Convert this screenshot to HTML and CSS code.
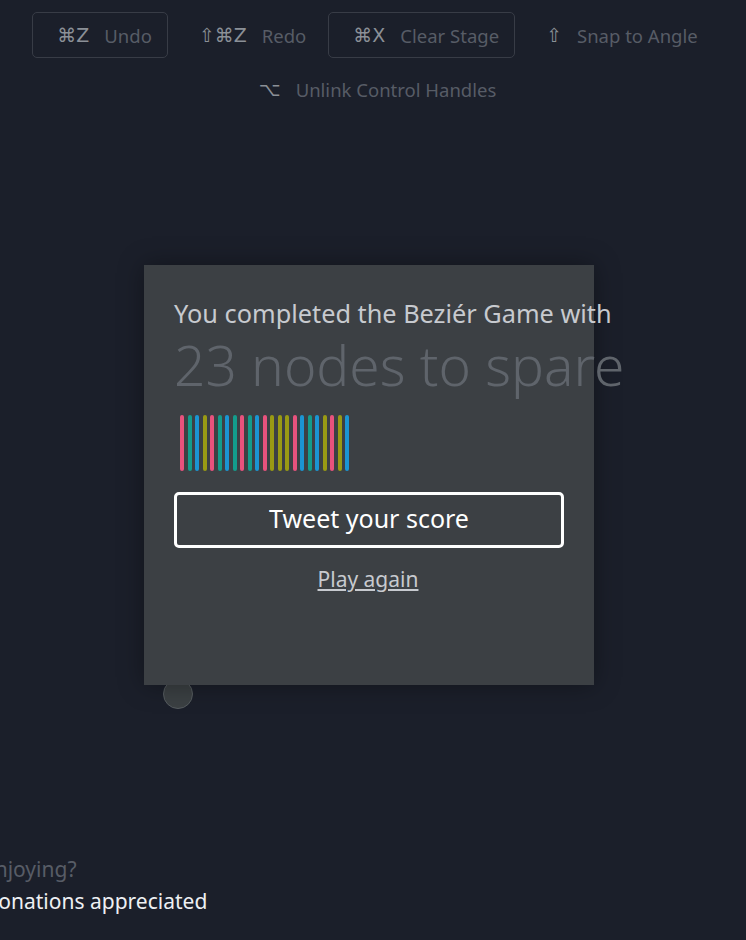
FILE: index.html
```html
<!DOCTYPE html>
<html lang="en">
<head>
<meta charset="utf-8">
<title>Bezier Game</title>
<link rel="stylesheet" href="styles.css">
</head>
<body>
<div class="stage">
  <nav class="toolbar">
    <button class="tool boxed"><span class="key">⌘Z</span><span class="label">Undo</span></button>
    <button class="tool"><span class="key">⇧⌘Z</span><span class="label">Redo</span></button>
    <button class="tool boxed"><span class="key">⌘X</span><span class="label">Clear Stage</span></button>
    <button class="tool"><span class="key">⇧</span><span class="label">Snap to Angle</span></button>
    <button class="tool"><span class="key">⌥</span><span class="label">Unlink Control Handles</span></button>
  </nav>

  <div class="node"></div>

  <div class="modal">
    <p class="intro">You completed the Beziér Game with</p>
    <p class="score">23 nodes to spare</p>
    <div class="bars">
      <span class="bar pink"></span><span class="bar teal"></span><span class="bar blue"></span><span class="bar olive"></span>
      <span class="bar pink"></span><span class="bar teal"></span><span class="bar blue"></span><span class="bar teal"></span>
      <span class="bar pink"></span><span class="bar teal"></span><span class="bar blue"></span><span class="bar pink"></span>
      <span class="bar olive"></span><span class="bar olive"></span><span class="bar olive"></span><span class="bar pink"></span>
      <span class="bar blue"></span><span class="bar teal"></span><span class="bar blue"></span><span class="bar olive"></span>
      <span class="bar pink"></span><span class="bar olive"></span><span class="bar blue"></span>
    </div>
    <button class="tweet">Tweet your score</button>
    <a class="again" href="#">Play again</a>
  </div>

  <div class="footer">
    <p class="enjoy">Enjoying?</p>
    <p class="donate">Donations appreciated</p>
  </div>
</div>
</body>
</html>
```

FILE: styles.css
```css
html, body {
  margin: 0;
  padding: 0;
  height: 100%;
  background: #1b1f2a;
  overflow: hidden;
}
body {
  font-family: "Noto Sans", "Open Sans", "DejaVu Sans", sans-serif;
}
.stage {
  position: relative;
  width: 746px;
  height: 940px;
}
.toolbar {
  display: flex;
  flex-wrap: wrap;
  justify-content: center;
  column-gap: 6px;
  row-gap: 8px;
  padding: 12px 0 0;
}
.tool {
  display: flex;
  align-items: center;
  gap: 15px;
  height: 46px;
  padding: 0 15px 0 24px;
  border: 1px solid transparent;
  border-radius: 5px;
  background: transparent;
  font-family: inherit;
  font-size: 18.5px;
  cursor: pointer;
}
.tool.boxed {
  border-color: #383c46;
}
.key {
  color: #8b9097;
  font-family: "DejaVu Sans", sans-serif;
  font-size: 19px;
}
.label {
  color: #575c66;
}
.node {
  position: absolute;
  left: 163px;
  top: 679px;
  width: 28px;
  height: 28px;
  border-radius: 50%;
  background: #3b4043;
  border: 1px solid #555b5f;
}
.modal {
  position: absolute;
  left: 144px;
  top: 265px;
  width: 450px;
  height: 420px;
  box-sizing: border-box;
  padding: 28px 30px 0;
  background: #3c4044;
  box-shadow: 0 0 24px rgba(0, 0, 0, 0.35);
  display: flex;
  flex-direction: column;
  align-items: flex-start;
}
.intro {
  margin: 0;
  font-size: 25.3px;
  line-height: 40px;
  color: #c7cacf;
  white-space: nowrap;
}
.score {
  margin: 0;
  font-size: 55px;
  font-weight: 300;
  line-height: 64px;
  color: #5f646b;
  white-space: nowrap;
}
.bars {
  display: flex;
  gap: 3.5px;
  margin: 18px 0 0 6px;
}
.bar {
  display: block;
  width: 4px;
  height: 56px;
  border-radius: 2px;
}
.pink { background: #e8527d; }
.teal { background: #139c8c; }
.blue { background: #1b95d3; }
.olive { background: #999a14; }
.tweet {
  margin-top: 21px;
  width: 390px;
  height: 56px;
  padding: 0 0 4px;
  border: 3px solid #ffffff;
  border-radius: 5px;
  background: transparent;
  color: #ffffff;
  font-family: inherit;
  font-size: 25px;
  cursor: pointer;
}
.again {
  align-self: center;
  margin-top: 17px;
  margin-left: -2px;
  font-size: 21px;
  color: #c7cacf;
  text-decoration: underline;
}
.footer {
  position: absolute;
  left: -17px;
  bottom: 23px;
}
.footer p {
  margin: 0;
  font-size: 21px;
  line-height: 32px;
}
.enjoy { color: #575c66; }
.donate { color: #eef0f3; }
```
